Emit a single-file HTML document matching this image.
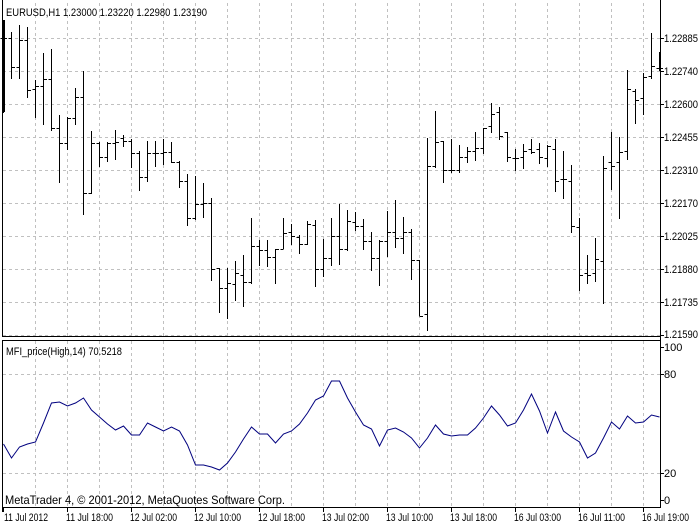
<!DOCTYPE html>
<html><head><meta charset="utf-8">
<style>
html,body{margin:0;padding:0;background:#fff;}
body{width:700px;height:525px;overflow:hidden;position:relative;font-family:"Liberation Sans",sans-serif;}
svg{position:absolute;left:0;top:0;}
svg text{font-family:"Liberation Sans",sans-serif;font-size:11px;fill:#000;}
</style></head><body>
<svg id="s" width="700" height="525" viewBox="0 0 700 525" shape-rendering="crispEdges">
<g id="grid" stroke="#c0c0c0" stroke-width="1" stroke-dasharray="3,3"></g>
<g id="bars" stroke="#000" stroke-width="1"></g>
<polyline id="mfi" fill="none" stroke="#00007f" stroke-width="1" shape-rendering="auto"/>
<g stroke="#000" stroke-width="1">
<line x1="2.5" y1="0" x2="2.5" y2="336"/>
<line x1="2" y1="336.5" x2="661" y2="336.5"/>
<line x1="2" y1="340.5" x2="661" y2="340.5"/>
<line x1="2.5" y1="340" x2="2.5" y2="512"/>
<line x1="660.5" y1="0" x2="660.5" y2="508"/>
<line x1="2" y1="507.5" x2="661" y2="507.5"/>
</g>
<g id="ticks" stroke="#000" stroke-width="1"></g>
<text x="6" y="16" textLength="201" lengthAdjust="spacingAndGlyphs">EURUSD,H1  1.23000 1.23220 1.22980 1.23190</text>
<text x="6" y="355" textLength="116" lengthAdjust="spacingAndGlyphs">MFI_price(High,14) 70.5218</text>
<text x="5" y="504" style="font-size:12px" textLength="280" lengthAdjust="spacingAndGlyphs">MetaTrader 4, © 2001-2012, MetaQuotes Software Corp.</text>
<g style="font-size:10.5px" id="pl">
<text x="664" y="42">1.22885</text>
<text x="664" y="75">1.22740</text>
<text x="664" y="108">1.22600</text>
<text x="664" y="141">1.22455</text>
<text x="664" y="174">1.22310</text>
<text x="664" y="207">1.22170</text>
<text x="664" y="240">1.22025</text>
<text x="664" y="273">1.21880</text>
<text x="664" y="306">1.21735</text>
<text x="664" y="338">1.21590</text>
</g>
<g style="font-size:10.5px">
<text x="664" y="351">100</text>
<text x="664" y="378">80</text>
<text x="664" y="477">20</text>
<text x="664" y="504">0</text>
</g>
<g style="font-size:10.5px" id="tl">
<text x="4" y="521">11 Jul 2012</text>
<text x="66" y="521">11 Jul 18:00</text>
<text x="130" y="521">12 Jul 02:00</text>
<text x="194" y="521">12 Jul 10:00</text>
<text x="258" y="521">12 Jul 18:00</text>
<text x="322" y="521">13 Jul 02:00</text>
<text x="386" y="521">13 Jul 10:00</text>
<text x="450" y="521">13 Jul 18:00</text>
<text x="514" y="521">16 Jul 03:00</text>
<text x="578" y="521">16 Jul 11:00</text>
<text x="642" y="521">16 Jul 19:00</text>
</g>
</svg>
<script>
var NS="http://www.w3.org/2000/svg";
document.querySelectorAll("#pl text").forEach(function(t){t.setAttribute("textLength","34");t.setAttribute("lengthAdjust","spacingAndGlyphs");});
document.querySelectorAll("#tl text").forEach(function(t,i){t.setAttribute("textLength",i==0?"44":"47");t.setAttribute("lengthAdjust","spacingAndGlyphs");});
function L(g,x1,y1,x2,y2){var l=document.createElementNS(NS,"line");l.setAttribute("x1",x1);l.setAttribute("y1",y1);l.setAttribute("x2",x2);l.setAttribute("y2",y2);document.getElementById(g).appendChild(l);}
for(var k=0;k<20;k++){var x=35.5+32*k;L("grid",x,3,x,336);L("grid",x,341,x,507);}
for(var k=0;k<9;k++){var y=38.5+33*k;L("grid",3,y,660,y);}
L("grid",3,335.5,660,335.5);
L("grid",3,374.5,660,374.5);L("grid",3,473.5,660,473.5);
var pr=[38,71,104,137,170,203,236,269,302,335,347,374,473,500];
pr.forEach(function(y){L("ticks",660,y+0.5,664,y+0.5);});
for(var k=0;k<11;k++){var x=3.5+64*k;L("ticks",x,507,x,512);}
var B=[[20,112,38,38],[32,78,38,67],[25,78,67,40],[27,97,40,90],[80,117,89,86],[53,124,86,79],[49,130,79,128],[115,182,128,143],[117,149,143,118],[88,124,118,97],[71,214,97,193],[131,193,193,143],[142,166,143,157],[142,161,157,143],[130,159,143,142],[135,146,138,141],[139,167,141,153],[151,190,153,177],[141,181,177,153],[141,166,153,153],[139,164,153,152],[142,162,152,162],[161,187,162,181],[174,225,181,218],[176,219,218,204],[183,217,204,203],[198,280,203,269],[268,312,268,288],[268,318,288,283],[261,300,284,273],[255,306,275,282],[218,283,282,246],[240,265,246,250],[240,266,250,257],[249,283,257,249],[218,248,249,233],[224,244,232,236],[235,253,237,244],[221,244,244,224],[220,286,225,269],[239,276,269,258],[218,265,258,236],[204,264,236,249],[210,250,249,221],[212,230,222,226],[219,249,226,241],[232,270,241,258],[240,285,258,241],[211,256,241,232],[200,247,232,238],[217,253,238,232],[229,279,232,260],[260,315,260,316],[138,330,314,166],[111,167,166,142],[141,182,141,170],[139,172,170,170],[145,172,170,157],[147,162,157,151],[132,160,151,148],[128,153,148,128],[103,132,126,114],[107,139,112,136],[132,161,132,157],[149,170,158,158],[144,168,157,151],[139,153,149,152],[143,163,149,157],[145,166,158,146],[139,191,149,181],[151,198,179,179],[165,232,181,226],[218,290,227,275],[255,283,273,275],[238,281,273,259],[156,303,261,168],[132,189,162,166],[137,218,162,152],[70,159,151,89],[89,123,91,100],[73,114,98,77],[33,78,76,66],[52,70,68,68]];
B.forEach(function(b,i){var x=3.5+8*i;L("bars",x,b[0],x,b[1]+1);L("bars",x-3,b[2]+0.5,x,b[2]+0.5);L("bars",x,b[3]+0.5,x+3.5,b[3]+0.5);});
L("bars",4.5,20,4.5,112);
var M=[444,458,447,444,442,423,403,402,406,403,398,410,417,424,430,426,435,435,423,427,431,427,431,445,465,465,467,470,463,452,439,427,434,434,443,434,431,424,413,400,396,381,381,398,412,425,429,446,430,428,432,438,448,438,425,434,436,435,435,428,418,406,415,426,423,410,394,411,433,412,431,437,442,458,453,438,422,429,416,423,422,415,417];
document.getElementById("mfi").setAttribute("points",M.map(function(y,i){return (3.5+8*i)+","+y;}).join(" "));
</script>
</body></html>
